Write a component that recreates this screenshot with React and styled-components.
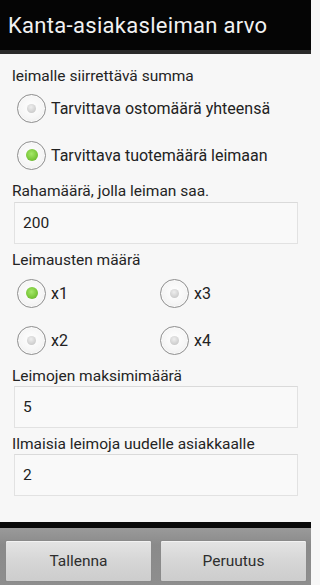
import styled, { createGlobalStyle } from "styled-components";

const Global = createGlobalStyle`
  html, body {
    margin: 0;
    padding: 0;
    background: #f7f7f7;
  }
  body {
    font-family: Roboto, "Noto Sans", "DejaVu Sans", sans-serif;
    color: #222;
  }
`;

const Screen = styled.div`
  width: 311px;
  height: 585px;
  display: flex;
  flex-direction: column;
  background: #f7f7f7;
  overflow: hidden;
`;

const TitleBar = styled.div`
  height: 50px;
  flex: none;
  background: #050505;
  border-bottom: 4px solid #2a2a2a;
  display: flex;
  align-items: center;
  padding: 0 8px;
  color: #f2f2f2;
  font-size: 22px;
  letter-spacing: 0.3px;
`;

const Content = styled.div`
  flex: 1;
  padding: 12px 13px 0 12px;
  display: flex;
  flex-direction: column;
`;

const Label = styled.div`
  height: 20px;
  line-height: 20px;
  font-size: 15.5px;
  color: #242424;
  margin-top: ${(p) => p.$gap || 0}px;
`;

const RadioRow = styled.label`
  height: 46px;
  display: flex;
  align-items: center;
  gap: 5px;
  padding-left: 5px;
  font-size: 16px;
  color: #222;
  margin-top: ${(p) => p.$gap || 0}px;
`;

const RadioGrid = styled.div`
  display: grid;
  grid-template-columns: 143px 1fr;
`;

const Ring = styled.span`
  width: 27px;
  height: 27px;
  border-radius: 50%;
  border: 1px solid #8e8e8e;
  background: radial-gradient(circle at 50% 45%, #ffffff 0%, #f6f6f6 55%, #e6e6e6 100%);
  box-shadow: inset 0 0 0 1px #fafafa;
  display: flex;
  align-items: center;
  justify-content: center;
  flex: none;
`;

const Dot = styled.span`
  width: ${(p) => (p.$on ? 12 : 9)}px;
  height: ${(p) => (p.$on ? 12 : 9)}px;
  border-radius: 50%;
  background: ${(p) =>
    p.$on
      ? "radial-gradient(circle at 45% 40%, #a6e86a 0%, #7cc93c 55%, #5ea52a 100%)"
      : "radial-gradient(circle at 45% 35%, #eeeeee 0%, #d2d2d2 60%, #bdbdbd 100%)"};
`;

const Field = styled.div`
  height: 40px;
  margin: ${(p) => p.$top || 0}px 0 0 2px;
  border: 1px solid #e2e2e2;
  border-top-color: #dadada;
  background: #f9f9f9;
  display: flex;
  align-items: center;
  padding-left: 8px;
  font-size: 15.5px;
  color: #222;
`;

const ButtonBar = styled.div`
  flex: none;
  border-top: 6px solid #0a0a0a;
  background: linear-gradient(#9a9a9a, #8a8a8a 30%, #8e8e8e);
  display: flex;
  gap: 8px;
  padding: 12px 4px 3px 5px;
  box-sizing: border-box;
  height: 63px;
`;

const Button = styled.button`
  flex: 1;
  border: 1px solid #8a8a8a;
  border-radius: 2px;
  background: linear-gradient(#e4e4e4, #d6d6d6 50%, #cdcdcd);
  box-shadow: inset 0 1px 0 #f2f2f2;
  font-family: Roboto, "Noto Sans", sans-serif;
  font-size: 15.5px;
  color: #2e2e2e;
  padding: 0;
`;

function Radio({ on, children, gap }) {
  return (
    <RadioRow $gap={gap}>
      <Ring>
        <Dot $on={on} />
      </Ring>
      {children}
    </RadioRow>
  );
}

export default function App() {
  return (
    <Screen>
      <Global />
      <TitleBar>Kanta-asiakasleiman arvo</TitleBar>
      <Content>
        <Label>leimalle siirrettävä summa</Label>
        <Radio gap={-1}>Tarvittava ostomäärä yhteensä</Radio>
        <Radio on gap={1}>Tarvittava tuotemäärä leimaan</Radio>
        <Label $gap={3}>Rahamäärä, jolla leiman saa.</Label>
        <Field $top={1}>200</Field>
        <Label $gap={6}>Leimausten määrä</Label>
        <RadioGrid>
          <Radio on>x1</Radio>
          <Radio>x3</Radio>
          <Radio gap={1}>x2</Radio>
          <Radio gap={1}>x4</Radio>
        </RadioGrid>
        <Label $gap={3}>Leimojen maksimimäärä</Label>
        <Field>5</Field>
        <Label $gap={6}>Ilmaisia leimoja uudelle asiakkaalle</Label>
        <Field>2</Field>
      </Content>
      <ButtonBar>
        <Button>Tallenna</Button>
        <Button>Peruutus</Button>
      </ButtonBar>
    </Screen>
  );
}
